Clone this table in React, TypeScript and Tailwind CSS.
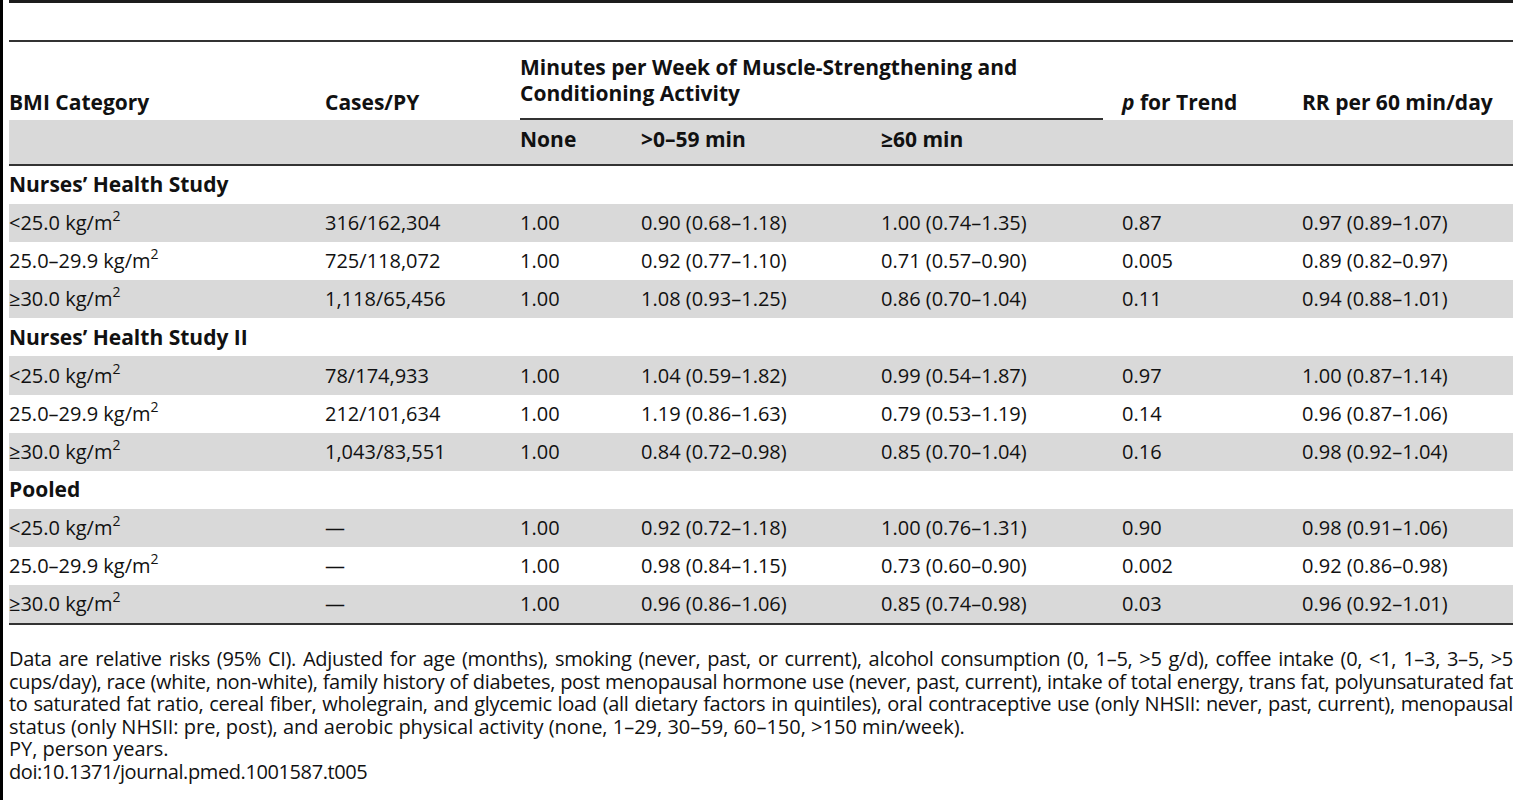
import React from "react";

type Row = {
  bmi: "lt" | "mid" | "ge";
  cases: string;
  none: string;
  low: string;
  high: string;
  p: string;
  rr: string;
};

type Section = { title: string; rows: Row[] };

const sections: Section[] = [
  {
    title: "Nurses’ Health Study",
    rows: [
      { bmi: "lt", cases: "316/162,304", none: "1.00", low: "0.90 (0.68–1.18)", high: "1.00 (0.74–1.35)", p: "0.87", rr: "0.97 (0.89–1.07)" },
      { bmi: "mid", cases: "725/118,072", none: "1.00", low: "0.92 (0.77–1.10)", high: "0.71 (0.57–0.90)", p: "0.005", rr: "0.89 (0.82–0.97)" },
      { bmi: "ge", cases: "1,118/65,456", none: "1.00", low: "1.08 (0.93–1.25)", high: "0.86 (0.70–1.04)", p: "0.11", rr: "0.94 (0.88–1.01)" },
    ],
  },
  {
    title: "Nurses’ Health Study II",
    rows: [
      { bmi: "lt", cases: "78/174,933", none: "1.00", low: "1.04 (0.59–1.82)", high: "0.99 (0.54–1.87)", p: "0.97", rr: "1.00 (0.87–1.14)" },
      { bmi: "mid", cases: "212/101,634", none: "1.00", low: "1.19 (0.86–1.63)", high: "0.79 (0.53–1.19)", p: "0.14", rr: "0.96 (0.87–1.06)" },
      { bmi: "ge", cases: "1,043/83,551", none: "1.00", low: "0.84 (0.72–0.98)", high: "0.85 (0.70–1.04)", p: "0.16", rr: "0.98 (0.92–1.04)" },
    ],
  },
  {
    title: "Pooled",
    rows: [
      { bmi: "lt", cases: "—", none: "1.00", low: "0.92 (0.72–1.18)", high: "1.00 (0.76–1.31)", p: "0.90", rr: "0.98 (0.91–1.06)" },
      { bmi: "mid", cases: "—", none: "1.00", low: "0.98 (0.84–1.15)", high: "0.73 (0.60–0.90)", p: "0.002", rr: "0.92 (0.86–0.98)" },
      { bmi: "ge", cases: "—", none: "1.00", low: "0.96 (0.86–1.06)", high: "0.85 (0.74–0.98)", p: "0.03", rr: "0.96 (0.92–1.01)" },
    ],
  },
];

const cols = "grid grid-cols-[316px_195px_121px_240px_241px_180px_1fr]";

// footnote broken the same way as the printed table
const noteLines = [
  "Data are relative risks (95% CI). Adjusted for age (months), smoking (never, past, or current), alcohol consumption (0, 1–5, >5 g/d), coffee intake (0, <1, 1–3, 3–5, >5",
  "cups/day), race (white, non-white), family history of diabetes, post menopausal hormone use (never, past, current), intake of total energy, trans fat, polyunsaturated fat",
  "to saturated fat ratio, cereal fiber, wholegrain, and glycemic load (all dietary factors in quintiles), oral contraceptive use (only NHSII: never, past, current), menopausal",
];

const Kg: React.FC = () => (
  <>
    kg/m<sup className="relative -top-[9px] align-baseline text-[14px] leading-none">2</sup>
  </>
);

const BmiLabel: React.FC<{ kind: Row["bmi"] }> = ({ kind }) => {
  if (kind === "lt")
    return (
      <span>
        &lt;25.0 <Kg />
      </span>
    );
  if (kind === "mid")
    return (
      <span>
        25.0–29.9 <Kg />
      </span>
    );
  return (
    <span>
      ≥30.0 <Kg />
    </span>
  );
};

const App: React.FC = () => {
  return (
    <div
      className="min-h-[800px] w-[1513px] bg-white text-[#111] border-l-[3px] border-black pl-[6px]"
      style={{ fontFamily: '"Open Sans", "DejaVu Sans", sans-serif' }}
    >
      {/* Top rule */}
      <div className="h-[3px] bg-[#1c1c1c]" />
      <div className="h-[37px]" />

      <div className="border-t-2 border-[#333] text-[20px]">
        {/* Header */}
        <div className={`${cols} h-[78px] font-bold text-[21px]`}>
          <div className="flex items-end pb-[5px] leading-[26px]">BMI Category</div>
          <div className="flex items-end pb-[5px] leading-[26px]">Cases/PY</div>
          <div className="col-span-3 flex flex-col">
            <div className="pt-[12px] leading-[26px]">
              Minutes per Week of Muscle-Strengthening and
              <br />
              Conditioning Activity
            </div>
            <div className="mt-auto mr-[19px] h-[2px] bg-[#333]" />
          </div>
          <div className="flex items-end pb-[5px] leading-[26px]">
            <span>
              <i>p</i> for Trend
            </span>
          </div>
          <div className="flex items-end pb-[5px] leading-[26px]">RR per 60 min/day</div>
        </div>
        <div className={`${cols} h-[44px] bg-[#d9d9d9] font-bold text-[21px] items-center pb-[4px]`}>
          <div />
          <div />
          <div>None</div>
          <div>&gt;0–59 min</div>
          <div>≥60 min</div>
          <div />
          <div />
        </div>
        <div className="h-[2px] bg-[#333]" />

        {/* Body */}
        {sections.map((s) => (
          <React.Fragment key={s.title}>
            <div className={`${cols} h-[38.1px] items-center font-bold text-[21px]`}>
              <div className="col-span-3">{s.title}</div>
            </div>
            {s.rows.map((r, i) => (
              <div
                key={i}
                className={`${cols} h-[38.1px] items-center ${i === 1 ? "" : "bg-[#d9d9d9]"}`}
              >
                <div>
                  <BmiLabel kind={r.bmi} />
                </div>
                <div>{r.cases}</div>
                <div>{r.none}</div>
                <div>{r.low}</div>
                <div>{r.high}</div>
                <div>{r.p}</div>
                <div>{r.rr}</div>
              </div>
            ))}
          </React.Fragment>
        ))}
        <div className="h-[2px] bg-[#333]" />
      </div>

      {/* Footnotes */}
      <div className="pt-[23px] text-[20px] leading-[22.5px] text-[#111]">
        {noteLines.map((l) => (
          <div key={l} className="whitespace-nowrap tracking-[-0.3px] text-justify [text-align-last:justify]">
            {l}
          </div>
        ))}
        <div>status (only NHSII: pre, post), and aerobic physical activity (none, 1–29, 30–59, 60–150, &gt;150 min/week).</div>
        <div>PY, person years.</div>
        <div className="tracking-[-0.4px]">doi:10.1371/journal.pmed.1001587.t005</div>
      </div>
    </div>
  );
};

export default App;
